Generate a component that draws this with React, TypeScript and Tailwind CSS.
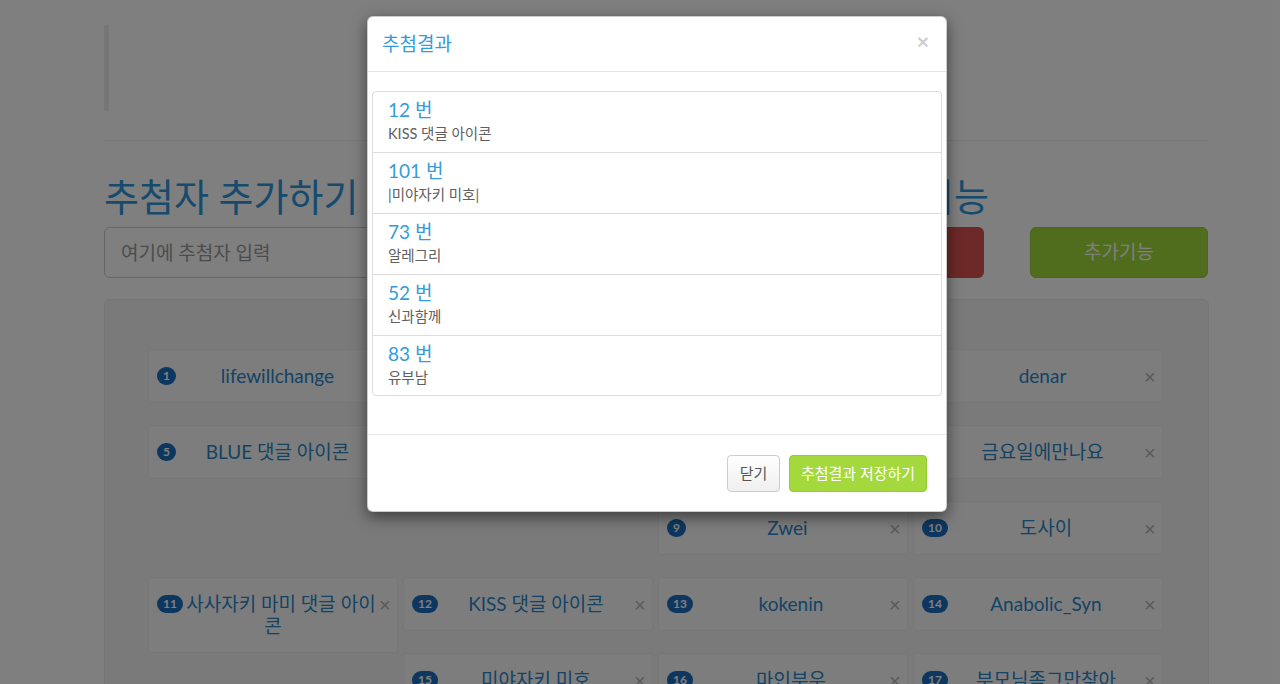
import React from "react";

const cards: { n: number; t: string }[] = [
  { n: 1, t: "lifewillchange" },
  { n: 2, t: "나나" },
  { n: 3, t: "Zero" },
  { n: 4, t: "denar" },
  { n: 5, t: "BLUE 댓글 아이콘" },
  { n: 6, t: "하하호호 히히 댓글 아이콘이다" },
  { n: 7, t: "Kimchi" },
  { n: 8, t: "금요일에만나요" },
  { n: 9, t: "Zwei" },
  { n: 10, t: "도사이" },
  { n: 11, t: "사사자키 마미 댓글 아이콘" },
  { n: 12, t: "KISS 댓글 아이콘" },
  { n: 13, t: "kokenin" },
  { n: 14, t: "Anabolic_Syn" },
  { n: 15, t: "미야자키 미호" },
  { n: 16, t: "마인부우" },
  { n: 17, t: "부모님좀그만찾아" },
  { n: 18, t: "alpha" },
  { n: 19, t: "beta" },
  { n: 20, t: "gamma" },
];

const results = [
  { n: "12 번", t: "KISS 댓글 아이콘" },
  { n: "101 번", t: "|미야자키 미호|" },
  { n: "73 번", t: "알레그리" },
  { n: "52 번", t: "신과함께" },
  { n: "83 번", t: "유부남" },
];

function Card({ n, t }: { n: number; t: string }) {
  return (
    <div className="float-left w-[250px] mr-[5px] mb-[22px] border border-[#eeeeee] bg-[#fbfbfb] rounded-[3px] px-[8px] py-[15px] text-center text-[19px] leading-[22px] text-[#2a86c9]">
      <span className="float-left mt-[2px] h-[18px] min-w-[19px] px-[6px] rounded-full bg-[#1a6ebd] text-white text-[12px] font-bold leading-[18px] text-center">
        {n}
      </span>
      <span className="float-right w-[10px] mt-[2px] text-[20px] leading-[20px] text-[#b5b5b5] font-[family-name:'Liberation_Sans',sans-serif]">
        ×
      </span>
      {t}
    </div>
  );
}

export default function App() {
  return (
    <div className="relative h-[684px] w-[1280px] overflow-hidden bg-white font-[family-name:'Lato','Noto_Sans_CJK_KR',sans-serif]">
      <div className="w-[1209px] pl-[104px] pt-[25px]">
        <div className="h-[86px] border-l-[5px] border-[#eeeeee]" />
        <div className="mt-[29px] border-t border-[#eeeeee]" />
        <div className="mt-[35px] flex">
          <div className="w-[536px] flex flex-col">
            <h1 className="text-[38px] leading-[40px] text-[#2f96da]">추첨자 추가하기</h1>
            <input
              className="mt-[11px] h-[51px] w-full border border-[#cccccc] rounded-[6px] px-[16px] text-[19px] text-[#555] placeholder:text-[#999] outline-none"
              placeholder="여기에 추첨자 입력"
            />
          </div>
          <div className="ml-[28px] w-[321px] flex flex-col">
            <h1 className="text-[38px] leading-[40px] text-[#2f96da] text-right">추첨 기능</h1>
            <button className="mt-[11px] mr-[5px] h-[51px] rounded-[6px] bg-[#d9534f] text-white text-[19px]">
              추첨하기
            </button>
          </div>
          <div className="ml-[41px] w-[178px] flex flex-col">
            <div className="h-[40px]" />
            <button className="mt-[11px] h-[51px] rounded-[6px] bg-[#a0d83a] border border-[#97cc34] text-white text-[19px]">
              추가기능
            </button>
          </div>
        </div>
        <div className="mt-[21px] flow-root bg-[#f5f5f5] border border-[#ebebeb] rounded-[6px] pt-[49px] pl-[43px] pr-[40px] pb-[30px]">
          {cards.map((c) => (
            <Card key={c.n} n={c.n} t={c.t} />
          ))}
        </div>
      </div>

      <div className="absolute inset-0 bg-black/50" />

      <div className="absolute left-[367px] top-[16px] w-[580px] bg-white rounded-[6px] border border-black/20 shadow-[0_5px_15px_rgba(0,0,0,0.5)]">
        <div className="flex items-center justify-between pl-[14px] pr-[15px] py-[15px] border-b border-[#e5e5e5]">
          <div className="text-[19px] leading-[24px] text-[#349cdc]">추첨결과</div>
          <div className="-mt-[6px] mr-[2px] text-[21px] leading-none font-bold text-black/20 font-[family-name:'Liberation_Sans',sans-serif]">
            ×
          </div>
        </div>
        <div className="pt-[19px] px-[4px] pb-[38px]">
          <div className="border border-[#dddddd] rounded-[4px]">
            {results.map((r, i) => (
              <div
                key={i}
                className={
                  "px-[15px] pt-[7px] " +
                  (i < results.length - 1 ? "h-[61px] border-b border-[#dddddd]" : "h-[59px]")
                }
              >
                <div className="text-[19px] leading-[22px] text-[#349cdc]">{r.n}</div>
                <div className="mt-[2px] text-[14.5px] leading-[22px] text-[#606060]">{r.t}</div>
              </div>
            ))}
          </div>
        </div>
        <div className="flex justify-end gap-[9px] border-t border-[#e5e5e5] pt-[20px] pb-[19px] pr-[19px]">
          <button className="h-[37px] w-[53px] rounded-[4px] border border-[#cccccc] bg-gradient-to-b from-white to-[#efefef] text-[15px] text-[#555]">
            닫기
          </button>
          <button className="h-[37px] w-[138px] rounded-[4px] border border-[#97cc34] bg-[#a3d93c] text-[15px] text-white">
            추첨결과 저장하기
          </button>
        </div>
      </div>
    </div>
  );
}
